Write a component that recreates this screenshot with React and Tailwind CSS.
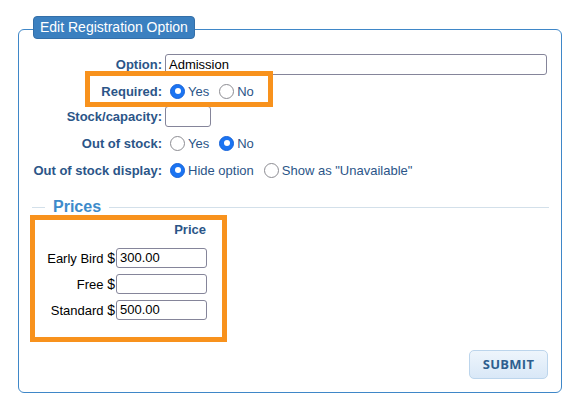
import React from "react";

const Radio = ({ checked }) =>
  checked ? (
    <span className="w-[15px] h-[15px] rounded-full bg-[#1b74f2] border border-[#1663d9] flex items-center justify-center shrink-0">
      <span className="w-[6px] h-[6px] rounded-full bg-white" />
    </span>
  ) : (
    <span className="w-[15px] h-[15px] rounded-full bg-white border border-[#8c8c92] shrink-0" />
  );

const Opt = ({ checked, label, first }) => (
  <span className={`flex items-center ${first ? "ml-[5px]" : "ml-[10px]"}`}>
    <Radio checked={checked} />
    <span className="ml-[3px] text-[13px] text-[#2b5588] pt-[1px]">{label}</span>
  </span>
);

const Row = ({ label, children, className }) => (
  <div className={`flex items-center ${className}`}>
    <div className="w-[143px] text-right text-[13px] font-bold text-[#2b5588] leading-[15px]">{label}</div>
    <div className="ml-[3px] flex items-center h-full">{children}</div>
  </div>
);

const PriceRow = ({ label, value, className }) => (
  <div className={`flex items-center justify-end h-[20px] pr-[15px] ${className}`}>
    <span className="text-[13px] text-black">{label} <span className="text-[14px]">$</span></span>
    <div className="ml-[1px] w-[91px] h-[20px] border border-[#85859a] rounded-[3px] bg-white pl-[3px] flex items-center text-[13px] text-black">
      {value}
    </div>
  </div>
);

export default function App() {
  return (
    <div
      className="w-[581px] h-[411px] bg-white pt-[29px] pl-[18px]"
      style={{ fontFamily: '"Liberation Sans", Arial, sans-serif' }}
    >
      <div className="relative w-[544px] h-[364px] border border-[#3f87c8] rounded-[6px]">
        <div className="absolute left-[14px] top-[-14px] h-[23px] w-[162px] rounded-[4px] bg-[#3b80c0] border border-[#346fa8] text-white text-[14px] pl-[6px] flex items-center">
          Edit Registration Option
        </div>

        <div className="absolute left-[66px] top-[41px] w-[188px] h-[36px] border-[5px] border-[#f8921d] z-10" />

        <div className="pt-[24px]">
          <Row label="Option:" className="h-[21px]">
            <div className="w-[382px] h-[21px] border border-[#85859a] rounded-[3px] bg-white pl-[3px] flex items-center text-[13px] text-black">
              Admission
            </div>
          </Row>
          <Row label="Required:" className="h-[24px] mt-[4px]">
            <Opt checked first label="Yes" />
            <Opt label="No" />
          </Row>
          <Row label="Stock/capacity:" className="h-[21px] mt-[3px]">
            <div className="w-[46px] h-[21px] border border-[#85859a] rounded-[3px] bg-white" />
          </Row>
          <Row label="Out of stock:" className="h-[24px] mt-[4px]">
            <Opt first label="Yes" />
            <Opt checked label="No" />
          </Row>
          <Row label="Out of stock display:" className="h-[24px] mt-[3px]">
            <Opt checked first label="Hide option" />
            <Opt label={'Show as "Unavailable"'} />
          </Row>
        </div>

        <div className="mt-[16px] h-[18px] flex items-center pl-[13px] pr-[12px]">
          <div className="w-[13px] h-px bg-[#d3e0ea]" />
          <div className="mx-[8px] text-[16px] font-bold text-[#3d8bcb] leading-[18px]">Prices</div>
          <div className="flex-1 h-px bg-[#d3e0ea]" />
        </div>

        <div className="mt-[-1px] ml-[11px] w-[197px] h-[127px] border-[5px] border-[#f8921d]">
          <div className="pt-[2px] pr-[16px] h-[18px] text-right text-[13px] font-bold text-[#2b5588] leading-[16px]">
            Price
          </div>
          <PriceRow label="Early Bird" value="300.00" className="mt-[10px]" />
          <PriceRow label="Free" value="" className="mt-[6px]" />
          <PriceRow label="Standard" value="500.00" className="mt-[6px]" />
        </div>

        <div className="mt-[8px] pr-[13px] flex justify-end">
          <div
            className="w-[79px] h-[29px] rounded-[5px] border border-[#bcd5ec] bg-gradient-to-b from-[#eef5fc] to-[#d9e8f7] flex items-center justify-center text-[13px] font-bold text-[#2e5f8f] tracking-[0.3px]"
            style={{ fontFamily: '"Open Sans", sans-serif' }}
          >
            SUBMIT
          </div>
        </div>
      </div>
    </div>
  );
}
